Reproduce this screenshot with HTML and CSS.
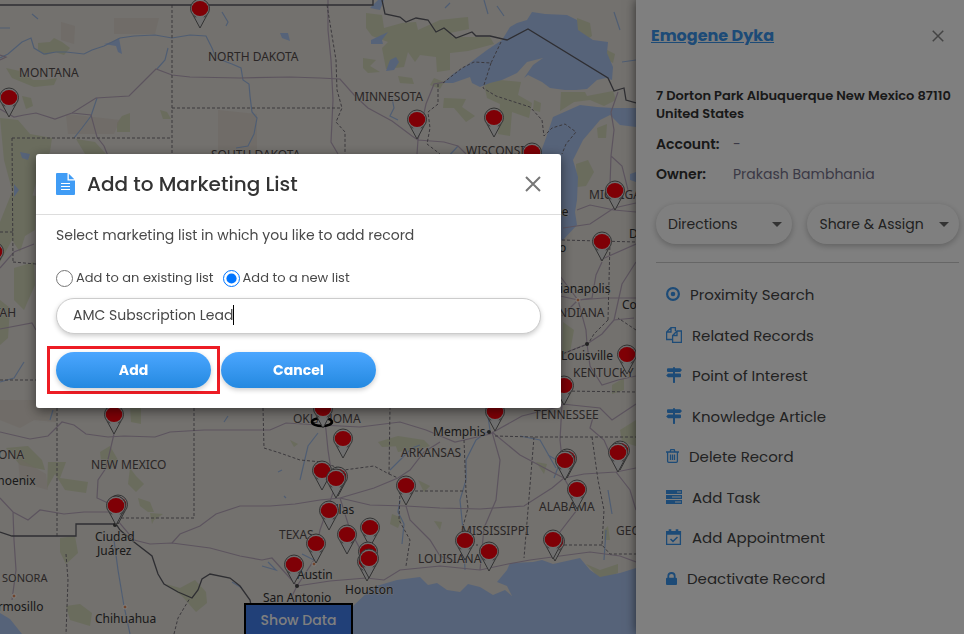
FILE: index.html
```html
<!DOCTYPE html>
<html lang="en">
<head>
	<meta charset="utf-8"/>
	<title>Add to Marketing List</title>
	<link rel="stylesheet" href="styles.css">
</head>

<body>

<main class="page">
	<section class="map">
		<svg class="map_canvas" viewBox="0 0 636 634" preserveAspectRatio="xMinYMin slice">
			<defs>
				<g id="pin">
					<path d="M-7 -13 L0 0 L7 -13" fill="#dedede" stroke="#666" stroke-width="1"/>
					<circle cx="0" cy="-19.500" r="9.500" fill="#dedede" stroke="#666" stroke-width="1"/>
					<path d="M-5 -13.500 L0 -2 L5 -13.500 Z" fill="#dedede"/>
					<ellipse cx="0" cy="-19.500" rx="8.300" ry="7.500" fill="#ff000c"/>
				</g>
			</defs>

			<!-- forests and parks -->
			<g class="forest">
				<path d="M0 118 L18 120 L30 134 L52 138 L50 152 L38 175 L30 205 L12 190 L4 160 Z"/>
				<path d="M38 43 L50 42 L54 38 L62 42 L70 48 L64 55 L55 52 L46 55 L38 50 Z"/>
				<path d="M6 68 L24 72 L33 80 L44 80 L57 78 L54 85 L34 87 L12 78 Z"/>
				<path d="M22 96 L31 98 L33 106 L26 109 Z M122 116 L130 113 L130 132 L117 132 L117 123 Z M160 110 L167 112 L171 119 L163 119 Z"/>
				<path d="M76 139 L95 142 L106 154 L85 154 Z"/>
				<path d="M12 192 L36 196 L35 230 L25 236 L20 252 L12 240 L0 262 L0 222 Z M0 300 L10 308 L8 338 L0 345 Z"/>
				<path d="M14 268 L34 262 L35 285 L24 310 L14 300 Z"/>
				<path d="M366 13 L382 15 L384 28 L402 23 L416 22 L418 30 L440 20 L458 18 L468 17 L469 29 L450 33 L452 37 L490 37 L494 44 L468 51 L450 53 L450 70 L437 72 L436 57 L420 55 L415 62 L408 52 L404 67 L386 69 L382 48 L388 42 L372 36 L366 28 Z"/>
				<path d="M363 58 L376 60 L370 66 L380 72 L368 73 L363 68 Z M398 76 L412 78 L414 84 L400 83 Z M434 78 L444 82 L440 89 L430 85 Z"/>
				<path d="M577 18 L590 23 L592 36 L586 40 L577 32 Z M607 50 L615 54 L613 63 L607 60 Z"/>
				<path d="M484 84 L500 80 L521 82 L518 95 L532 103 L529 118 L512 112 L510 136 L498 134 L500 104 L487 98 Z"/>
				<path d="M444 98 L466 99 L462 107 L475 116 L466 122 L454 108 L443 108 Z M534 100 L541 103 L540 112 L533 110 Z"/>
				<path d="M561 92 L585 92 L587 96 L613 91 L616 100 L604 106 L590 100 L574 102 L560 111 Z"/>
				<path d="M576 164 L588 160 L594 172 L586 186 L577 187 Z M597 128 L607 124 L606 138 L598 138 Z"/>
				<path d="M563 322 L574 330 L570 352 L562 356 Z M612 385 L624 378 L624 390 L612 394 Z"/>
				<path d="M130 407 L141 408 L141 424 L131 422 Z M48 462 L66 462 L60 478 L88 482 L86 493 L65 490 L55 474 L47 488 Z"/>
				<path d="M6 448 L28 446 L42 460 L45 470 L20 465 Z M100 452 L110 446 L118 460 L110 470 L102 468 Z M130 468 L136 476 L144 484 L136 492 L128 484 Z"/>
				<path d="M138 498 L150 502 L154 512 L148 512 L140 506 Z M150 513 L163 514 L154 520 L152 524 Z"/>
				<path d="M60 538 L75 536 L78 553 L66 564 L60 552 Z M66 606 L80 604 L92 613 L90 626 L70 620 Z"/>
				<path d="M166 584 L180 588 L195 580 L206 592 L207 603 L196 612 L182 596 Z"/>
				<path d="M378 442 L398 436 L424 440 L430 446 L418 450 L400 446 L382 447 Z M290 440 L298 444 L294 447 Z"/>
				<path d="M395 444 L408 444 L412 450 L398 452 Z M434 521 L442 522 L440 530 Z"/>
				<path d="M586 564 L600 570 L618 564 L618 573 L606 578 L600 580 L592 570 Z"/>
				<path d="M620 430 L636 420 L636 446 L622 442 Z M604 530 L608 526 L610 540 L604 540 Z"/>
				<path d="M418 480 L430 486 L424 492 Z M536 462 L547 464 L544 474 Z M392 514 L402 518 L398 528 L390 524 Z"/>
			</g>
			<g class="reserve">
				<path d="M114 18 L159 18 L155 34 L114 34 Z M66 114 L120 120 L114 134 L68 134 Z M218 110 L257 114 L257 153 L218 150 Z M61 22 L75 26 L74 44 L61 40 Z"/>
				<path d="M0 400 L56 400 L56 422 L34 420 L20 428 L0 420 Z M18 458 L46 474 L48 490 L20 482 Z"/>
			</g>

			<!-- lakes, rivers and the gulf -->
			<g class="water">
				<path d="M443 83 L453 74 L467 65 L487 50 L502 40 L510 27 L517 23 L527 20 L532 12 L545 14 L567 15 L577 20 L578 30 L593 40 L608 42 L607 53 L613 67 L612 80 L606 78 L597 80 L587 89 L576 90 L565 90 L550 88 L542 82 L528 75 L524 78 L533 65 L543 58 L527 62 L517 73 L502 80 L490 83 L480 87 L472 83 L470 77 L453 83 Z"/>
				<path d="M553 117 L580 105 L597 107 L613 108 L636 108 L636 127 L620 125 L610 115 L600 120 L583 140 L573 160 L578 177 L577 200 L575 212 L577 225 L563 240 L545 245 L540 154 L546 138 Z"/>
				<path d="M340 634 L352 607 L373 587 L397 580 L420 577 L428 585 L437 583 L447 590 L460 592 L468 584 L480 587 L493 595 L505 590 L512 596 L507 586 L497 582 L507 570 L510 563 L533 562 L542 560 L553 564 L580 558 L590 570 L600 577 L620 573 L636 568 L636 634 Z"/>
				<path d="M0 613 L10 619 L22 634 L0 634 Z M390 60 L396 57 L399 62 L394 70 L386 71 Z M371 40 L388 32 L382 40 L383 44 L371 44 Z M104 44 L112 42 L119 38 L122 54 L118 52 L116 46 Z M378 0 L384 0 L380 10 L370 8 Z"/>
				<path d="M280 33 L288 33 L290 41 L282 38 Z M20 152 L30 154 L28 160 L22 158 Z M14 184 L19 190 L14 197 Z M630 174 L636 172 L636 182 L630 180 Z"/>
			</g>
			<g class="river">
				<path d="M0 58 L8 54 L22 42 L31 38 L34 48 L44 54 L56 52 L66 52 L84 54 L92 50 L104 46 L120 38 L134 36 L155 35 L172 38 L190 35 L206 36 L212 48 L216 58 L232 64 L241 68 L243 80 L249 84 L250 96 L252 112 L257 118 L254 134 L248 146 L236 148"/>
				<path d="M168 48 L165 60 L157 69 M97 98 L91 116 L82 128 L74 138 M50 420 L53 410 M32 14 L38 19 M0 28 L10 28 M222 12 L228 22 L226 26"/>
				<path d="M402 544 L404 524 L398 512 L400 500 M465 570 L463 530 L460 500 L466 480 L466 460 L476 440 L490 430 L487 410" />
				<path d="M390 470 L400 460 L412 448 L420 445 M548 455 L560 462 L554 478 M606 530 L604 560 M612 514 L608 490 M556 468 L540 440 L520 436"/>
				<path d="M114 540 L118 570 L124 606 L130 634 M392 98 L394 108 L390 116 L398 120 M447 158 L458 146 M318 433 L308 446 L300 480"/>
				<path d="M0 382 L14 378 L24 362 M488 14 L484 0 M497 6 L504 16 M450 3 L445 8 M614 12 L620 30 M622 62 L636 60"/>
				<path d="M268 562 L276 570 L262 566 M302 554 L314 560 M232 582 L242 588 M278 472 L282 470 M286 498 L284 496 M224 422 L228 416"/>
			</g>

			<!-- highways -->
			<g class="road">
				<path d="M0 109 L14 117 L24 115 L36 113 L55 119 L72 113 L96 98 L129 96 L142 83 L156 69 L172 75 L190 77 L240 78 L290 77 L320 78 L340 79 L355 96 L368 108 L392 121 L412 136 L418 140"/>
				<path d="M72 113 L91 115 L97 137 L104 146 L108 156 M0 55 L6 57 L0 60"/>
				<path d="M328 0 L328 30 L331 60 L333 100 L331 142 L338 154 M417 154 L418 140 L426 104 L434 84 L445 82 M418 140 L444 142 L458 146 L466 154"/>
				<path d="M618 92 L611 112 L614 130 L611 156 L622 166 L628 190 M611 156 L610 185 L614 194"/>
				<path d="M563 228 L590 224 L614 208 L636 203 M577 210 L590 205 L614 210 L636 212 M602 262 L596 275 L592 298 L578 300 L560 276"/>
				<path d="M560 296 L578 300 L604 298 L636 298 M578 300 L562 316 M578 300 L586 330 L587 344 M614 320 L602 334 L587 344 L562 354 M614 320 L634 318 M600 260 L636 244"/>
				<path d="M587 344 L590 366 L602 385 L618 380 L636 376 M562 404 L600 408 L612 420 L636 404 M614 320 L622 284 L636 262"/>
				<path d="M0 432 L30 439 L48 436 L62 422 L74 425 L86 434 L108 437 L124 436 L155 437 L170 432 L204 430 L270 430 L286 423 L320 425 L360 427 L400 422 L426 430 L455 442 L490 434 L522 416 L562 406"/>
				<path d="M114 434 L106 468 L98 480 L97 498 L110 504 L117 520 L134 540 L150 544 L172 543 L210 548 L240 556 L262 560 L272 558 L297 586"/>
				<path d="M172 543 L180 534 L200 526 L216 514 L240 506 L270 506 L295 504 L320 500 L340 498"/>
				<path d="M322 400 L326 430 L328 450 L334 490 L320 530 L314 560 L297 586 L290 600"/>
				<path d="M340 498 L374 488 L398 478 L410 470 L424 452 L440 442 M340 498 L370 505 L406 506 L440 508 L480 509 L524 506 L552 488 L564 478 L584 474 L616 472 L636 468"/>
				<path d="M492 432 L500 460 L496 500 L484 528 L480 570 M492 432 L520 455 L552 472 L564 478 M564 478 L580 506 L560 532 L552 558"/>
				<path d="M406 506 L410 520 L430 540 L440 556 L456 562 M297 586 L330 581 L366 578 L384 580 L400 570 L440 566 L480 570 L508 564 L530 560 L560 556 L590 552 L620 556 L636 562"/>
				<path d="M0 498 L13 512 L28 520 L40 510 L64 514 L84 512 L116 512 M13 512 L14 540 L16 570 L12 600 M340 498 L350 530 L366 560"/>
				<path d="M562 404 L560 440 L564 478 M618 472 L604 440 L590 428 L594 414 M0 329 L32 323 L36 330 M0 268 L14 252 L34 244 M616 472 L630 490 L636 510"/>
			</g>

			<!-- state borders -->
			<g class="state">
				<path d="M172 5 L172 154 M172 108 L342 108 M12 138 L172 138 M12 138 L13 262 M13 262 L36 264 M0 232 L13 232 M0 380 L36 380"/>
				<path d="M327 5 L336 60 L337 90 L342 108 L336 122 L345 132 L345 154 M438 84 L438 104 L428 112 L430 128 L427 144 L440 154"/>
				<path d="M443 83 L462 68 L474 62 L491 63 L501 42 M491 63 L483 88 L496 96 L530 107 L542 120 L544 136 L552 128 L565 124 L576 132 L566 144 L562 154"/>
				<path d="M57 408 L57 536 M194 408 L194 518 L120 518 M263 408 L264 448 L280 453 L300 460 L322 462 L344 470 L374 466 L389 474 L390 408 M389 474 L398 478"/>
				<path d="M400 491 L466 491 M400 491 L399 520 L410 540 L406 566 M464 440 L466 491 L468 508 L462 530 L466 545 M466 545 L478 545"/>
				<path d="M495 436 L534 437 L590 437 L636 437 M534 437 L528 510 L524 558 M592 437 L598 480 L604 510 L602 545 L610 554 L636 554 M602 545 L562 545"/>
				<path d="M562 240 L636 242 M610 242 L608 320 M608 320 L594 334 L588 344 L562 354 M562 391 L636 392 M636 330 L618 318"/>
				<path d="M66 554 L68 580 L66 634 M174 634 L178 618 L190 598"/>
			</g>

			<!-- national border -->
			<g class="nation">
				<path d="M0 5 L373 5 L373 0 M382 0 L385 14 L400 17 L406 22 L416 18 L428 20 L436 32 L444 28 L456 38 L472 32 L476 36 L490 36 L507 40 L528 29 L608 78 L614 91 L624 88 L626 100 L636 103"/>
				<path d="M0 532 L12 536 L76 536 L76 524 L116 524 L120 530 L134 542 L152 556 L158 574 L164 584 L178 592 L192 598 L198 590 L202 579 L210 574 L230 578 L240 586 L250 600 L252 610"/>
			</g>

			<g class="city">
				<circle cx="489" cy="432" r="2"/><circle cx="115" cy="525" r="2"/><circle cx="297" cy="586" r="2"/><circle cx="587" cy="344" r="2"/>
			</g>
			<g class="town">
				<circle cx="578" cy="300" r="2"/><circle cx="14" cy="596" r="2"/><circle cx="125" cy="607" r="2"/><circle cx="314" cy="564" r="2"/>
			</g>

			<g class="state_name">
				<text x="19" y="77">MONTANA</text>
				<text x="208" y="61">NORTH DAKOTA</text>
				<text x="211" y="159">SOUTH DAKOTA</text>
				<text x="354" y="101">MINNESOTA</text>
				<text x="466" y="155">WISCONSIN</text>
				<text x="589" y="199">MICHIGAN</text>
				<text x="554" y="317">INDIANA</text>
				<text x="573" y="377">KENTUCKY</text>
				<text x="534" y="419">TENNESSEE</text>
				<text x="-15" y="317">UTAH</text>
				<text x="-28" y="459">ARIZONA</text>
				<text x="91" y="469">NEW MEXICO</text>
				<text x="293" y="423">OKLAHOMA</text>
				<text x="401" y="457">ARKANSAS</text>
				<text x="461" y="535">MISSISSIPPI</text>
				<text x="539" y="511">ALABAMA</text>
				<text x="616" y="535">GEORGIA</text>
				<text x="418" y="563">LOUISIANA</text>
				<text x="279" y="539">TEXAS</text>
				<text class="small" x="2" y="582">SONORA</text>
			</g>
			<g class="city_name">
				<text x="508" y="216">Milwaukee</text>
				<text x="521" y="252">Chicago</text>
				<text x="629" y="238">Detroit</text>
				<text x="541" y="293">Indianapolis</text>
				<text x="622" y="309">Columbus</text>
				<text x="561" y="360">Louisville</text>
				<text x="433" y="436">Memphis</text>
				<text x="-10" y="485">Phoenix</text>
				<text x="95" y="541">Ciudad</text>
				<text x="97" y="555">Juárez</text>
				<text x="-18" y="611">Hermosillo</text>
				<text x="95" y="623">Chihuahua</text>
				<text x="320" y="514">Dallas</text>
				<text x="297" y="579">Austin</text>
				<text x="263" y="602">San Antonio</text>
				<text x="345" y="594">Houston</text>
			</g>

			<ellipse class="origin" cx="322" cy="422" rx="10" ry="4"/>
			<use href="#pin" x="200" y="28"/>
			<use href="#pin" x="9" y="117"/>
			<use href="#pin" x="-6" y="271"/>
			<use href="#pin" x="417" y="139"/>
			<use href="#pin" x="494" y="137"/>
			<use href="#pin" x="532" y="172"/>
			<use href="#pin" x="615" y="210"/>
			<use href="#pin" x="602" y="261"/>
			<use href="#pin" x="627" y="374"/>
			<use href="#pin" x="564" y="405"/>
			<use href="#pin" x="495" y="431"/>
			<use href="#pin" x="114" y="434"/>
			<use href="#pin" x="118" y="524"/>
			<use href="#pin" x="116" y="525"/>
			<use href="#pin" x="323" y="428"/>
			<use href="#pin" x="343" y="458"/>
			<use href="#pin" x="322" y="490"/>
			<use href="#pin" x="338" y="496"/>
			<use href="#pin" x="336" y="498"/>
			<use href="#pin" x="329" y="530"/>
			<use href="#pin" x="406" y="505"/>
			<use href="#pin" x="370" y="547"/>
			<use href="#pin" x="347" y="554"/>
			<use href="#pin" x="316" y="563"/>
			<use href="#pin" x="294" y="584"/>
			<use href="#pin" x="368" y="571"/>
			<use href="#pin" x="367" y="581"/>
			<use href="#pin" x="369" y="578"/>
			<use href="#pin" x="465" y="560"/>
			<use href="#pin" x="489" y="571"/>
			<use href="#pin" x="567" y="478"/>
			<use href="#pin" x="565" y="480"/>
			<use href="#pin" x="577" y="509"/>
			<use href="#pin" x="555" y="561"/>
			<use href="#pin" x="553" y="559"/>
			<use href="#pin" x="620" y="470"/>
			<use href="#pin" x="618" y="472"/>
		</svg>
		<div class="map_footer">
			<button type="button" class="show_data">Show Data</button>
		</div>
	</section>

	<aside class="panel">
		<header class="panel_head">
			<a href="#" class="record_name">Emogene Dyka</a>
			<button type="button" class="close small_close" aria-label="Close panel">
				<svg viewBox="0 0 16 16"><path d="M1 1 L15 15 M15 1 L1 15"/></svg>
			</button>
		</header>
		<div class="panel_body">
			<p class="address">7 Dorton Park Albuquerque New Mexico 87110 United States</p>
			<dl class="details">
				<dt>Account:</dt><dd>-</dd>
				<dt>Owner:</dt><dd>Prakash Bambhania</dd>
			</dl>
			<div class="pickers">
				<div class="picker directions">
					<select aria-label="Directions"><option>Directions</option></select>
				</div>
				<div class="picker share">
					<select aria-label="Share &amp; Assign"><option>Share &amp; Assign</option></select>
				</div>
			</div>
			<ul class="actions">
				<li><a href="#">
					<svg width="14" height="14" viewBox="0 0 14 14"><circle cx="7" cy="7" r="5.900" fill="none" stroke="currentColor" stroke-width="2.200"/><circle cx="7" cy="7" r="2.300" fill="currentColor"/></svg>
					Proximity Search</a></li>
				<li><a href="#">
					<svg width="16" height="16" viewBox="0 0 16 16" fill="none" stroke="currentColor" stroke-width="1.300"><path d="M6 12.500 H.6 V5 L5 .6 H9.400 V4 M5 .6 V5 H.6 M6.600 15.400 V8.500 L11 4 H15.400 V15.400 Z M11 4 V8.500 H6.600"/></svg>
					Related Records</a></li>
				<li><a href="#">
					<svg width="16" height="16" viewBox="0 0 16 16" fill="currentColor"><path d="M7 .5 Q8 -.5 9 .5 V1.200 H14.200 L16 3 L14.200 5 H9 V6.500 H14 Q15 6.500 15 7.500 V9.300 Q15 10.300 14 10.300 H9 V15.500 Q8 16.500 7 15.500 V10.300 H2 L.2 8.400 L2 6.500 H7 V5 H2 Q1 5 1 4 V2.200 Q1 1.200 2 1.200 H7 Z"/></svg>
					Point of Interest</a></li>
				<li><a href="#">
					<svg width="16" height="16" viewBox="0 0 16 16" fill="currentColor"><path d="M7 .5 Q8 -.5 9 .5 V1.200 H14.200 L16 3 L14.200 5 H9 V6.500 H14 Q15 6.500 15 7.500 V9.300 Q15 10.300 14 10.300 H9 V15.500 Q8 16.500 7 15.500 V10.300 H2 L.2 8.400 L2 6.500 H7 V5 H2 Q1 5 1 4 V2.200 Q1 1.200 2 1.200 H7 Z"/></svg>
					Knowledge Article</a></li>
				<li><a href="#">
					<svg width="13" height="14" viewBox="0 0 13 14" fill="none" stroke="currentColor" stroke-width="1.300"><path d="M0 3 H13 M4 3 L4.800 .7 H8.200 L9 3 M1.600 3 V12.200 Q1.600 13.300 2.800 13.300 H10.200 Q11.400 13.300 11.400 12.200 V3 M4.500 5.500 V11 M6.500 5.500 V11 M8.500 5.500 V11"/></svg>
					Delete Record</a></li>
				<li><a href="#">
					<svg width="16" height="14" viewBox="0 0 16 14"><path fill="currentColor" fill-rule="evenodd" d="M0 0 H16 V4 H0 Z M11 1.500 V2.500 H15 V1.500 Z M0 5 H16 V9 H0 Z M6 6.500 V7.500 H15 V6.500 Z M0 10 H16 V14 H0 Z M9 11.500 V12.500 H15 V11.500 Z"/></svg>
					Add Task</a></li>
				<li><a href="#">
					<svg width="16" height="16" viewBox="0 0 16 16" fill="none" stroke="currentColor" stroke-width="1.300"><path d="M.6 2.600 H14.400 V15.300 H.6 Z"/><path fill="currentColor" d="M.6 2.600 H14.400 V5 H.6 Z"/><path stroke-width="2.600" d="M4 .2 V3.600 M11 .2 V3.600"/><path stroke-width="1.500" d="M4.500 10 L7 12.400 L11.500 8"/></svg>
					Add Appointment</a></li>
				<li><a href="#">
					<svg width="11" height="13" viewBox="0 0 11 13"><rect y="5.800" width="11" height="7.200" rx="1" fill="currentColor"/><path d="M2.300 7 V4 Q2.300 1 5.500 1 T8.700 4 V7" fill="none" stroke="currentColor" stroke-width="1.800"/></svg>
					Deactivate Record</a></li>
			</ul>
		</div>
	</aside>
</main>

<div class="backdrop">
	<form class="modal" role="dialog" aria-labelledby="modalTitle">
		<header class="modal_head">
			<svg class="file_icon" viewBox="0 0 19 22"><path d="M1 0 H11.500 V7.500 H19 V21 Q19 22 18 22 H1 Q0 22 0 21 V1 Q0 0 1 0 Z" fill="#409cf5"/><path d="M12.800 .8 L18.300 6.300 H12.800 Z" fill="#409cf5"/><path d="M5 10.500 H14 M5 13.500 H14 M5 16.500 H14" stroke="#fff" stroke-width="1.200"/></svg>
			<h1 id="modalTitle">Add to Marketing List</h1>
			<button type="button" class="close" aria-label="Close">
				<svg viewBox="0 0 16 16"><path d="M1 1 L15 15 M15 1 L1 15"/></svg>
			</button>
		</header>
		<div class="modal_body">
			<p class="hint">Select marketing list in which you like to add record</p>
			<div class="choices">
				<input type="radio" name="listType" id="existingList">
				<label for="existingList">Add to an existing list</label>
				<input type="radio" name="listType" id="newList" checked>
				<label for="newList">Add to a new list</label>
			</div>
			<div class="list_field">
				<input type="text" class="list_name" id="listName" aria-label="List name" value="AMC Subscription Lead">
				<span class="caret"></span>
			</div>
			<div class="buttons">
				<div class="marked"><button type="button" class="btn">Add</button></div>
				<button type="button" class="btn">Cancel</button>
			</div>
		</div>
	</form>
</div>

</body>
</html>
```

FILE: styles.css
```css
* {
	box-sizing: border-box;
}
body {
	margin: 0;
	font-family: Poppins, Inter, "Open Sans", sans-serif;
	font-size: 14px;
	color: #333;
}
button, select, input {
	font: inherit;
	color: inherit;
}
.page {
	display: flex;
	height: 100vh;
	overflow: hidden;
}

/* map */
.map {
	flex: 1;
	min-width: 0;
	position: relative;
	overflow: hidden;
	background: #e6e2dc;
}
.map_canvas {
	display: block;
	width: 100%;
	height: 100%;
}
.forest { fill: #c9d3a4; opacity: .6; }
.reserve { fill: #dccfc4; opacity: .5; }
.water { fill: #adc6f2; }
.river {
	fill: none;
	stroke: #9fbbe6;
	stroke-width: 1.2;
}
.road {
	fill: none;
	stroke: #b9a8bd;
	stroke-width: 1.2;
}
.state {
	fill: none;
	stroke: #77727a;
	stroke-width: 1;
	stroke-dasharray: 3 2;
}
.nation {
	fill: none;
	stroke: #5c5c64;
	stroke-width: 1.3;
}
.city { fill: #444; }
.town { fill: #e08a5a; stroke: #fff; }
.state_name, .city_name {
	font-family: "Noto Sans", "Open Sans", sans-serif;
	font-size: 12px;
	fill: #544c4c;
	stroke: #e6e2dc;
	stroke-width: 1;
	paint-order: stroke;
}
.state_name .small { font-size: 11px; }
.city_name { fill: #333; }
.origin {
	fill: none;
	stroke: #000;
	stroke-width: 2.5;
}
.map_footer {
	position: absolute;
	left: 0;
	right: 0;
	bottom: 0;
	padding-right: 39px;
	display: flex;
	justify-content: center;
	box-shadow: 0 0 6px rgba(0, 0, 0, .4);
}
.map_footer {
	box-shadow: none;
}
.show_data {
	height: 31px;
	padding: 2px 15px 0;
	border: 2px solid #000;
	border-bottom: 0;
	background: #4280f0;
	color: #fff;
	font-weight: 500;
}

/* record panel */
.panel {
	flex: 0 0 328px;
	position: relative;
	background: #fff;
	box-shadow: 0 0 10px rgba(0, 0, 0, .6);
}
.panel_head {
	display: flex;
	justify-content: space-between;
	align-items: center;
	height: 71px;
	padding: 0 20px 0 15px;
}
.record_name {
	font-size: 16px;
	font-weight: 700;
	color: #3a96ee;
}
.close {
	display: flex;
	padding: 0;
	border: 0;
	background: none;
}
.close svg {
	width: 16px;
	height: 16px;
	fill: none;
	stroke: #777;
	stroke-width: 2;
}
.small_close svg {
	width: 12px;
	height: 12px;
	stroke: #888;
}
.panel_body {
	padding: 16px 5px 0 20px;
}
.address {
	margin: 0;
	font-size: 13px;
	line-height: 18px;
	font-weight: 600;
}
.details {
	display: grid;
	grid-template-columns: 77px 1fr;
	margin: 6px 0 15px;
	line-height: 30px;
}
.details dt { font-weight: 600; }
.details dd {
	margin: 0;
	color: #77738c;
}
.pickers {
	display: flex;
	gap: 15px;
	padding-bottom: 18px;
	border-bottom: 1px solid #ccc;
}
.picker {
	position: relative;
}
.directions { flex: 9; }
.share { flex: 10; }
.picker::after {
	content: "";
	position: absolute;
	right: 10px;
	top: 18px;
	border: 5px solid transparent;
	border-top-color: #666;
	border-bottom: 0;
	pointer-events: none;
}
.picker select {
	appearance: none;
	width: 100%;
	height: 40px;
	padding: 0 12px;
	border: 0;
	border-radius: 20px;
	background: #fff;
	box-shadow: 0 2px 6px rgba(0, 0, 0, .25);
	color: #444;
}
.actions {
	list-style: none;
	margin: 11px 0 0;
	padding: 0 10px;
}
.actions li {
	padding-bottom: 1px;
}
.actions li:nth-child(even) {
	padding-bottom: 0;
}
.actions a {
	display: flex;
	align-items: center;
	gap: 10px;
	height: 40px;
	font-size: 15px;
	color: #444;
	text-decoration: none;
}
.actions svg { color: #3a96ee; }

/* dialog */
.backdrop {
	position: fixed;
	inset: 0;
	padding: 154px 403px 0 36px;
	background: rgba(0, 0, 0, .5);
}
.modal {
	background: #fff;
	border-radius: 3px;
	box-shadow: 0 3px 12px rgba(0, 0, 0, .5);
}
.modal_head {
	display: flex;
	align-items: center;
	gap: 12px;
	height: 61px;
	padding: 0 20px;
	border-bottom: 1px solid #ddd;
}
.modal_head h1 {
	flex: 1;
	margin: 0;
	font-size: 20px;
	font-weight: 500;
}
.file_icon {
	width: 19px;
	height: 22px;
}
.modal_body {
	padding: 10px 20px 14px;
	color: #484848;
}
.hint {
	margin: 0 0 23px;
	line-height: 20px;
}
.choices {
	display: flex;
	align-items: center;
	height: 20px;
	margin-bottom: 10px;
	font-size: 13px;
}
.choices input {
	width: 17px;
	height: 17px;
	margin: 0 3px 0 0;
}
.choices label { margin-right: 9px; }
.list_field {
	position: relative;
}
.list_name {
	display: block;
	width: 100%;
	height: 36px;
	padding: 0 16px 2px;
	border: 1px solid #ccc;
	border-radius: 18px;
	outline: 0;
	box-shadow: 0 2px 5px rgba(0, 0, 0, .2);
}
.caret {
	position: absolute;
	left: 177px;
	top: 7px;
	width: 1px;
	height: 20px;
	background: #000;
}
.buttons {
	display: flex;
	align-items: center;
	gap: 1px;
	margin: 12px 0 0 -9px;
}
.marked {
	padding: 3px 6px;
	border: 3px solid #ed1c24;
}
.btn {
	display: block;
	width: 155px;
	height: 36px;
	border: 0;
	border-radius: 18px;
	background: linear-gradient(#4ba6ff, #2489e0);
	box-shadow: 0 2px 5px rgba(0, 0, 0, .2);
	color: #fff;
	font-weight: 700;
}
```
